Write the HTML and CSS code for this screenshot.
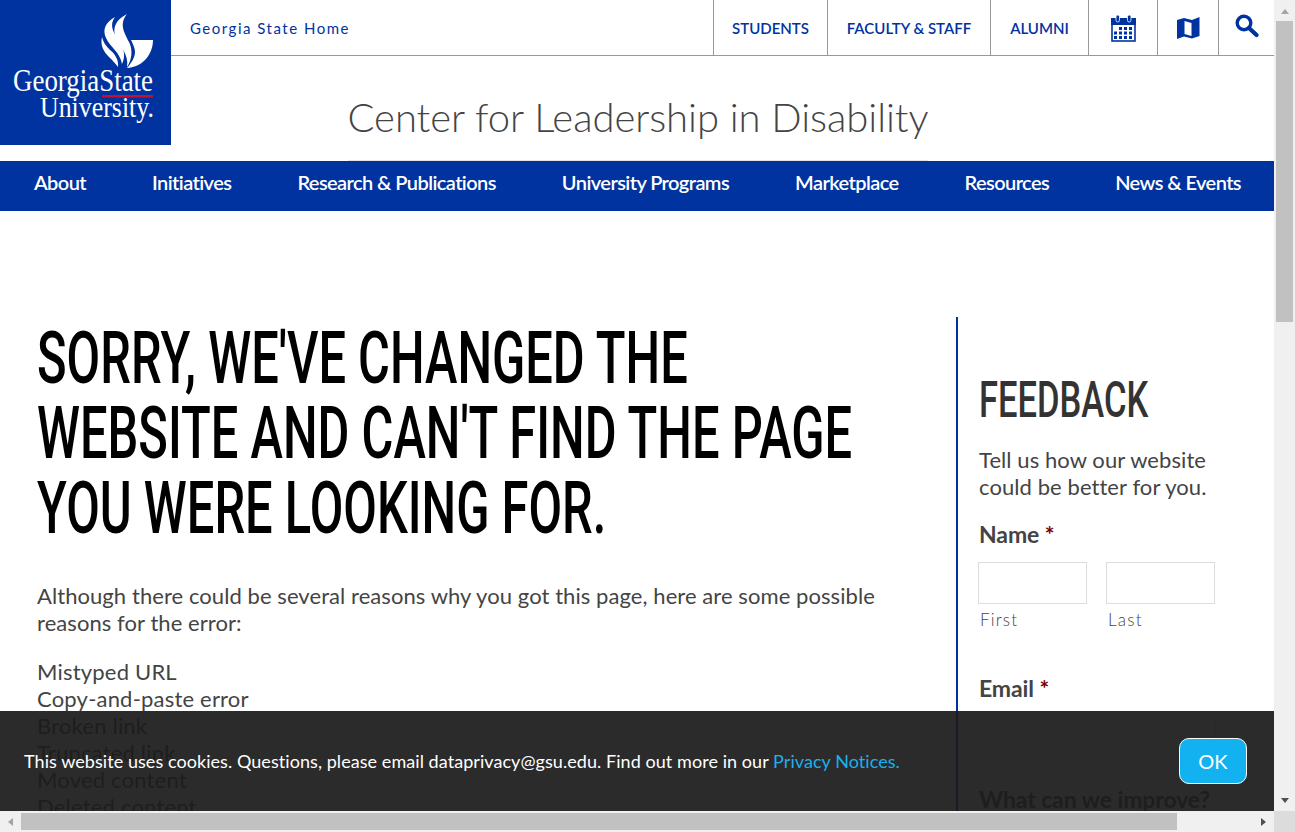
FILE: index.html
```html
<!DOCTYPE html>
<html lang="en">
<head>
    <meta charset="UTF-8">
    <title>Center for Leadership in Disability</title>
    <link rel="stylesheet" href="styles.css">
</head>
<body>
    <div class="window">
        <div class="viewport">
            <header class="site-header">
                <a class="logo" href="#">
                    <svg width="171" height="145" viewBox="0 0 171 145">
                        <path fill="#fff" d="M115 17C106 22 102 29 106 38C110 47 120 52 122 64C126 56 124 48 119 41C113 32 109 25 115 17Z"/>
                        <path fill="#fff" d="M127 14C115 20 112 29 116 38C120 47 129 54 127 67C132 60 133 50 129 42C124 32 119 24 127 14Z"/>
                        <path fill="#fff" d="M102 37C100 46 104 52 109 57C113 61 116 64 118 67C119 60 115 54 110 50C106 46 103 42 102 37Z"/>
                        <path fill="#fff" d="M131 40H153C153 54 143 67 127 68C133 61 137 54 134 47C133 44 132 42 131 40Z"/>
                        <rect x="102" y="95" width="51" height="2.500" fill="#c8102e"/>
                        <text class="logo-text" x="13" y="91" textLength="140" lengthAdjust="spacingAndGlyphs">GeorgiaState</text>
                        <text class="logo-text small" x="40" y="117" textLength="114" lengthAdjust="spacingAndGlyphs">University.</text>
                    </svg>
                </a>
                <div class="header-right">
                    <div class="util-bar">
                        <a class="home-link" href="#">Georgia State Home</a>
                        <ul class="util-links">
                            <li class="w-students"><a href="#">STUDENTS</a></li>
                            <li class="w-faculty"><a href="#">FACULTY &amp; STAFF</a></li>
                            <li class="w-alumni"><a href="#">ALUMNI</a></li>
                            <li class="w-cal">
                                <svg width="26" height="28" viewBox="0 0 26 28">
                                    <rect x="2" y="5" width="23" height="22" fill="none" stroke="#0033a0" stroke-width="1.6"/>
                                    <rect x="1" y="4" width="25" height="7" fill="#0033a0"/>
                                    <rect x="6" y="1" width="3.500" height="7" rx="1.700" fill="#0033a0" stroke="#fff" stroke-width=".8"/>
                                    <rect x="17.500" y="1" width="3.500" height="7" rx="1.700" fill="#0033a0" stroke="#fff" stroke-width=".8"/>
                                    <path fill="#0033a0" d="M9 13h3v3H9zM14 13h3v3h-3zM19 13h3v3h-3zM4 17.500h3v3H4zM9 17.500h3v3H9zM14 17.500h3v3h-3zM19 17.500h3v3h-3zM4 22h3v3H4zM9 22h3v3H9zM14 22h3v3h-3zM19 22h3v3h-3z"/>
                                </svg>
                            </li>
                            <li class="w-map">
                                <svg width="23" height="22" viewBox="0 0 23 22">
                                    <path fill="#0033a0" fill-rule="evenodd" d="M0 3L7 1L15 3L22.500 0V19L15 21.500L7 19.500L0 22ZM7.500 4V17L14.500 19V6Z"/>
                                </svg>
                            </li>
                            <li class="w-search">
                                <svg width="24" height="24" viewBox="0 0 24 24">
                                    <circle cx="9" cy="9" r="6.800" fill="none" stroke="#0033a0" stroke-width="3.400"/>
                                    <path d="M14 14L21.500 21" stroke="#0033a0" stroke-width="4.200" stroke-linecap="round"/>
                                </svg>
                            </li>
                        </ul>
                    </div>
                    <div class="site-title"><span>Center for Leadership in Disability</span></div>
                </div>
            </header>

            <nav class="main-nav">
                <a href="#">About</a>
                <a href="#">Initiatives</a>
                <a href="#">Research &amp; Publications</a>
                <a href="#">University Programs</a>
                <a href="#">Marketplace</a>
                <a href="#">Resources</a>
                <a href="#">News &amp; Events</a>
            </nav>

            <main class="content">
                <section class="error-text">
                    <h1>Sorry, we've changed the website and can't find the page you were looking for.</h1>
                    <p>Although there could be several reasons why you got this page, here are some possible reasons for the error:</p>
                    <ul class="reasons">
                        <li>Mistyped URL</li>
                        <li>Copy-and-paste error</li>
                        <li>Broken link</li>
                        <li>Truncated link</li>
                        <li>Moved content</li>
                        <li>Deleted content</li>
                    </ul>
                </section>
                <aside class="feedback">
                    <h2>Feedback</h2>
                    <p>Tell us how our website could be better for you.</p>
                    <div class="field-label">Name <span class="req">*</span></div>
                    <div class="name-row">
                        <label><input type="text"><span>First</span></label>
                        <label><input type="text"><span>Last</span></label>
                    </div>
                    <div class="field-label">Email <span class="req">*</span></div>
                    <input class="email" type="text">
                    <div class="field-label">What can we improve?</div>
                </aside>
            </main>

            <div class="cookie-bar">
                <p>This website uses cookies. Questions, please email dataprivacy@gsu.edu. Find out more in our <a href="#">Privacy Notices.</a></p>
                <button>OK</button>
            </div>
        </div>

        <div class="vbar">
            <span class="arrow up"></span>
            <div class="vthumb"></div>
            <span class="arrow down"></span>
        </div>
        <div class="hbar">
            <span class="arrow left"></span>
            <div class="hthumb"></div>
            <span class="arrow right"></span>
        </div>
        <div class="corner"></div>
    </div>
</body>
</html>
```

FILE: styles.css
```css
* {
    box-sizing: border-box;
}

html, body {
    margin: 0;
    height: 100%;
    overflow: hidden;
}

body {
    font-family: 'Lato', sans-serif;
    background-color: #fff;
    color: #444;
}

a {
    text-decoration: none;
}

.window {
    display: grid;
    grid-template-columns: 1274px 21px;
    grid-template-rows: 811px 21px;
    width: 1295px;
    height: 832px;
}

.viewport {
    position: relative;
    overflow: hidden;
}

/* header */
.site-header {
    display: flex;
    height: 161px;
}

.logo {
    display: block;
    width: 171px;
    height: 145px;
    background-color: #0033a0;
    flex: none;
}

.logo svg {
    display: block;
}

.logo-text {
    font-family: 'Liberation Serif', serif;
    font-size: 32px;
    fill: #fff;
}

.logo-text.small {
    font-size: 30px;
}

.header-right {
    flex: 1;
    display: flex;
    flex-direction: column;
}

.util-bar {
    display: flex;
    justify-content: space-between;
    height: 56px;
    border-bottom: 1px solid #999;
}

.home-link {
    color: #0033a0;
    font-size: 15px;
    letter-spacing: 1.5px;
    padding-left: 19px;
    line-height: 57px;
}

.util-links {
    display: flex;
    list-style: none;
    margin: 0;
    padding: 0;
}

.util-links li {
    display: flex;
    align-items: center;
    justify-content: center;
    border-left: 1px solid #999;
}

.util-links a {
    color: #0033a0;
    font-size: 15px;
    font-weight: 600;
}

.w-students { width: 114px; }
.w-faculty { width: 163px; }
.w-alumni { width: 98px; }
.w-cal { width: 69px; }
.w-map { width: 61px; }
.w-search { width: 56px; padding-bottom: 3px; }

.site-title {
    flex: 1;
    display: flex;
    justify-content: center;
    padding-right: 170px;
}

.site-title span {
    display: block;
    width: 580px;
    height: 105px;
    padding-top: 37px;
    font-size: 40px;
    line-height: 48px;
    font-weight: 300;
    letter-spacing: -0.05px;
    color: #444;
    white-space: nowrap;
    border-bottom: 1px solid #e4e4e4;
}

/* main nav */
.main-nav {
    display: flex;
    height: 50px;
    padding-left: 1px;
    background-color: #0033a0;
}

.main-nav a {
    padding: 0 33px;
    color: #fff;
    font-size: 20px;
    font-weight: 600;
    line-height: 43px;
    letter-spacing: -0.58px;
    white-space: nowrap;
}

/* content */
.content {
    display: flex;
    align-items: flex-start;
    padding-top: 106px;
}

.error-text {
    width: 956px;
    padding: 0 37px;
}

/* no Oswald here, so a squeezed Roboto stands in for it */
h1 {
    width: 1230px;
    margin: 4px 0 36px;
    font-family: 'Roboto', sans-serif;
    font-size: 72px;
    font-weight: 500;
    line-height: 75px;
    color: #000;
    text-transform: uppercase;
    transform: scaleX(0.678);
    transform-origin: left top;
}

.error-text p {
    margin: 0 0 22px;
    font-size: 22px;
    line-height: 27px;
    letter-spacing: 0.07px;
}

.reasons {
    list-style: none;
    margin: 0;
    padding: 0;
    font-size: 22px;
    line-height: 27px;
    letter-spacing: 0.2px;
}

.feedback {
    width: 318px;
    padding: 50px 0 0 21px;
    border-left: 2px solid #0033a0;
    color: #444;
}

h2 {
    width: 300px;
    margin: 0 0 13px;
    font-family: 'Roboto', sans-serif;
    font-size: 50px;
    font-weight: 500;
    line-height: 66px;
    color: #333;
    text-transform: uppercase;
    transform: scaleX(0.69);
    transform-origin: left top;
}

.feedback p {
    margin: 0 0 21px;
    width: 240px;
    font-size: 22px;
    line-height: 27px;
    letter-spacing: 0.08px;
}

.field-label {
    font-size: 23px;
    font-weight: 700;
    line-height: 27px;
    letter-spacing: -0.1px;
}

.req {
    color: #790000;
}

.name-row {
    display: flex;
    gap: 19px;
    margin: 14px 0 45px -1px;
}

.name-row label {
    display: block;
    width: 109px;
}

.name-row span {
    display: block;
    margin: 6px 0 0 2px;
    font-size: 17px;
    font-weight: 300;
    line-height: 20px;
    letter-spacing: 1.2px;
}

input[type="text"] {
    display: block;
    width: 109px;
    height: 42px;
    border: 1px solid #ddd;
    background-color: #fff;
}

input.email {
    width: 238px;
    margin: 12px 0 30px -1px;
}

/* cookie notice */
.cookie-bar {
    position: absolute;
    left: 0;
    right: 0;
    bottom: 0;
    height: 100px;
    display: flex;
    align-items: center;
    justify-content: space-between;
    padding: 0 27px 0 24px;
    background-color: rgba(27, 27, 27, 0.93);
    color: #fff;
}

.cookie-bar p {
    margin: 0;
    font-size: 18px;
    letter-spacing: 0.06px;
}

.cookie-bar a {
    color: #1ab0ef;
}

.cookie-bar button {
    width: 68px;
    height: 46px;
    padding: 0;
    border: 1px solid #fff;
    border-radius: 10px;
    background-color: #12b2f0;
    color: #fff;
    font-family: 'Lato', sans-serif;
    font-size: 20px;
}

/* scrollbars */
.vbar {
    display: flex;
    flex-direction: column;
    align-items: center;
    background-color: #f0f0f0;
}

.vthumb {
    width: 17px;
    height: 301px;
    margin-bottom: auto;
    background-color: #c1c1c1;
}

.hbar {
    display: flex;
    align-items: center;
    background-color: #f0f0f0;
}

.hthumb {
    width: 1156px;
    height: 17px;
    margin-right: auto;
    background-color: #c1c1c1;
}

.corner {
    background-color: #dcdcdc;
}

.arrow {
    display: block;
    flex: none;
    width: 0;
    height: 0;
}

.arrow.up {
    margin: 9px 0 7px;
    border: 4.500px solid transparent;
    border-top: 0;
    border-bottom: 5px solid #a3a3a3;
}

.arrow.down {
    margin: 7px 0 8px;
    border: 4.500px solid transparent;
    border-bottom: 0;
    border-top: 5px solid #505050;
}

.arrow.left {
    margin: 0 8px 0 8px;
    border: 4.500px solid transparent;
    border-left: 0;
    border-right: 5px solid #a3a3a3;
}

.arrow.right {
    margin: 0 8px 0 0;
    border: 4.500px solid transparent;
    border-right: 0;
    border-left: 5px solid #505050;
}
```
